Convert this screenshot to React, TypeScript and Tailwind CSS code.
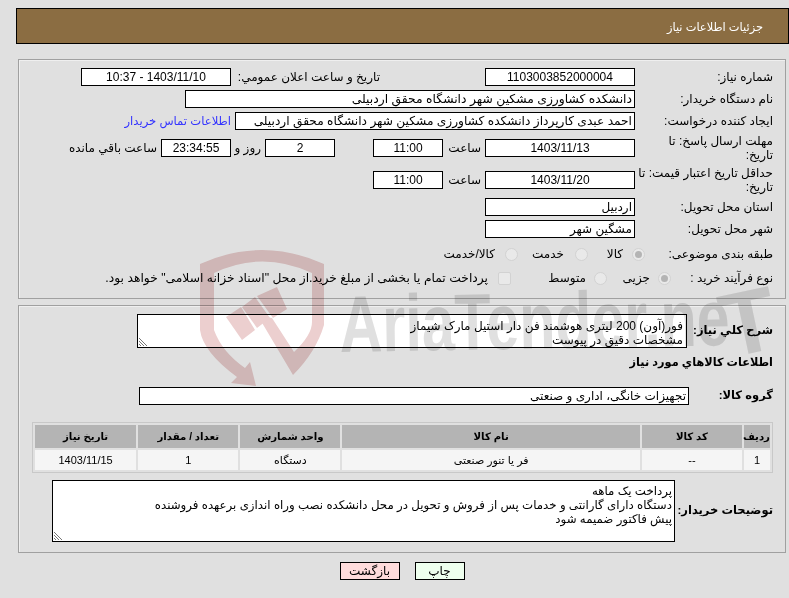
import React from "react";

const F = ({ w, children, cls = "", center = false }: { w: string; children?: React.ReactNode; cls?: string; center?: boolean }) => (
  <div className={`${w} h-[18px] shrink-0 border border-black bg-white leading-[16px] whitespace-nowrap overflow-hidden ${center ? "text-center" : "pr-[2px]"} ${cls}`}>{children}</div>
);

const Label = ({ children, cls = "" }: { children: React.ReactNode; cls?: string }) => (
  <div className={`w-[138px] shrink-0 leading-[14px] whitespace-nowrap ${cls}`}>{children}</div>
);

const Radio = ({ on }: { on?: boolean }) => (
  <span className="w-[13px] h-[13px] shrink-0 rounded-full border border-[#d2d2d2] bg-[#e9e9e9] flex items-center justify-center">
    {on && <span className="w-[7px] h-[7px] rounded-full bg-[#b4b4b4]" />}
  </span>
);

const Head = ({ w, children }: { w: string; children: React.ReactNode }) => (
  <th className={`${w} h-[23px] p-0 bg-[#b4b4b4] text-center font-bold text-[10.2px] whitespace-nowrap`}>{children}</th>
);
const Cell = ({ children }: { children: React.ReactNode }) => (
  <td className="h-[20px] p-0 bg-[#f5f5f5] text-center text-[11px]">{children}</td>
);

const Grip = () => (
  <svg className="absolute left-px bottom-px" width="9" height="9" viewBox="0 0 9 9">
    <path d="M0 1L8 9M0 4L5 9M0 7L2 9" stroke="#777" strokeWidth="1" fill="none" />
  </svg>
);

export default function App() {
  return (
    <div dir="rtl" className="relative h-[598px] w-[789px] overflow-hidden bg-[#e0e0e0] text-[12px] text-black pt-2" style={{ fontFamily: '"Liberation Sans", "DejaVu Sans", sans-serif' }}>
      <div className="ml-4 h-[36px] border border-black bg-[#8b6d42] text-white text-[11.4px] pr-[25px] leading-[36px]">جزئیات اطلاعات نیاز</div>

      <div className="ml-[18px] mr-[3px] mt-[15px] h-[240px] border border-[#a0a0a0] shadow-[inset_1px_1px_0_#efefef] pr-[12px] pt-[8px] flex flex-col">
        <div className="flex items-center h-[18px]">
          <Label>شماره نیاز:</Label>
          <F w="w-[150px]" center>1103003852000004</F>
          <div className="w-[254px] pr-[105px] whitespace-nowrap">تاریخ و ساعت اعلان عمومي:</div>
          <F w="w-[150px]" center>1403/11/10 - 10:37</F>
        </div>
        <div className="flex items-center h-[18px] mt-1">
          <Label>نام دستگاه خریدار:</Label>
          <F w="w-[450px]" cls="text-[12.35px]">دانشکده کشاورزی مشکین شهر دانشگاه محقق اردبیلی</F>
        </div>
        <div className="flex items-center h-[18px] mt-1">
          <Label>ایجاد کننده درخواست:</Label>
          <F w="w-[400px]" cls="text-[12.2px]">احمد عبدی کارپرداز دانشکده کشاورزی مشکین شهر دانشگاه محقق اردبیلی</F>
          <div className="pr-[4px] text-[#3333ff] text-[11.6px] whitespace-nowrap">اطلاعات تماس خریدار</div>
        </div>
        <div className="flex items-center h-[18px] mt-[9px]">
          <Label>مهلت ارسال پاسخ: تا<br />تاریخ:</Label>
          <F w="w-[150px]" center>1403/11/13</F>
          <div className="w-[42px] pr-[4px]">ساعت</div>
          <F w="w-[70px]" center>11:00</F>
          <div className="w-[38px]" />
          <F w="w-[70px]" center>2</F>
          <div className="w-[34px] pr-[4px] whitespace-nowrap">روز و</div>
          <F w="w-[70px]" center cls="bg-[#fffff0]">23:34:55</F>
          <div className="pr-[4px] whitespace-nowrap">ساعت باقي مانده</div>
        </div>
        <div className="flex items-center h-[18px] mt-[14px]">
          <Label>حداقل تاریخ اعتبار قیمت: تا<br />تاریخ:</Label>
          <F w="w-[150px]" center>1403/11/20</F>
          <div className="w-[42px] pr-[4px]">ساعت</div>
          <F w="w-[70px]" center>11:00</F>
        </div>
        <div className="flex items-center h-[18px] mt-[9px]">
          <Label>استان محل تحویل:</Label>
          <F w="w-[150px]">اردبیل</F>
        </div>
        <div className="flex items-center h-[18px] mt-1">
          <Label>شهر محل تحویل:</Label>
          <F w="w-[150px]">مشگین شهر</F>
        </div>
        <div className="flex items-center h-[18px] mt-[7px]">
          <div className="w-[128px] shrink-0">طبقه بندی موضوعی:</div>
          <Radio on />
          <div className="w-[44px] pr-[9px]">کالا</div>
          <Radio />
          <div className="w-[57px] pr-[11px]">خدمت</div>
          <Radio />
          <div className="pr-[10px] whitespace-nowrap">کالا/خدمت</div>
        </div>
        <div className="flex items-center h-[18px] mt-[6px]">
          <div className="w-[102px] shrink-0">نوع فرآیند خرید :</div>
          <Radio on />
          <div className="w-[51px] pr-[8px]">جزیی</div>
          <Radio />
          <div className="w-[83px] pr-[8px]">متوسط</div>
          <span className="w-[13px] h-[13px] shrink-0 rounded-[2px] border border-[#d2d2d2] bg-[#e9e9e9]" />
          <div className="pr-[10px] whitespace-nowrap text-[12.3px]">پرداخت تمام یا بخشی از مبلغ خرید.از محل "اسناد خزانه اسلامی" خواهد بود.</div>
        </div>
      </div>

      <div className="ml-[18px] mr-[3px] mt-[6px] h-[248px] border border-[#a0a0a0] shadow-[inset_1px_1px_0_#efefef] pr-[12px] pt-[8px] flex flex-col">
        <div className="flex items-center h-[34px]">
          <div className="w-[86px] shrink-0 font-bold text-[11.5px] whitespace-nowrap">شرح كلي نياز:</div>
          <div className="relative w-[550px] h-[34px] border border-black bg-white pr-[3px] pt-[4px] leading-[14px] whitespace-nowrap">
            فور(آون) 200 لیتری هوشمند فن دار استیل مارک شیماز
            <br />
            مشخصات دقیق در پیوست
            <Grip />
          </div>
        </div>
        <div className="mt-[6px] h-[16px] leading-[16px] font-bold text-[11.3px]">اطلاعات كالاهاي مورد نياز</div>
        <div className="flex items-center h-[18px] mt-[17px]">
          <div className="w-[84px] shrink-0 font-bold text-[11.5px]">گروه کالا:</div>
          <F w="w-[550px]">تجهیزات خانگی، اداری و صنعتی</F>
        </div>
        <div className="mt-[17px] ml-[12px]">
          <table className="w-[741px] border border-[#c8c8c8] border-separate border-spacing-[2px] table-fixed">
            <thead>
              <tr>
                <Head w="w-[26px]">ردیف</Head>
                <Head w="w-[100px]">کد کالا</Head>
                <Head w="w-[297px]">نام کالا</Head>
                <Head w="w-[100px]">واحد شمارش</Head>
                <Head w="w-[100px]">تعداد / مقدار</Head>
                <Head w="w-[101px]">تاریخ نیاز</Head>
              </tr>
            </thead>
            <tbody>
              <tr>
                <Cell>1</Cell>
                <Cell>--</Cell>
                <Cell>فر یا تنور صنعتی</Cell>
                <Cell>دستگاه</Cell>
                <Cell>1</Cell>
                <Cell>1403/11/15</Cell>
              </tr>
            </tbody>
          </table>
        </div>
        <div className="flex items-center h-[62px] mt-[7px]">
          <div className="w-[98px] shrink-0 font-bold text-[11.5px] whitespace-nowrap">توضیحات خریدار:</div>
          <div className="relative w-[623px] h-[62px] border border-black bg-white pr-[2px] pt-[3px] leading-[14px] whitespace-nowrap text-[11.8px]">
            پرداخت یک ماهه
            <br />
            دستگاه دارای گارانتی و خدمات پس از فروش و تحویل در محل دانشکده نصب وراه اندازی برعهده فروشنده
            <br />
            پیش فاکتور ضمیمه شود
            <Grip />
          </div>
        </div>
      </div>

      <div className="flex justify-center gap-[15px] mt-[9px] pl-[15px]">
        <button className="w-[50px] h-[18px] border border-black bg-[#eeffee] leading-[16px]">چاپ</button>
        <button className="w-[60px] h-[18px] border border-black bg-[#ffdcdc] leading-[16px]">بازگشت</button>
      </div>

      <svg className="absolute left-0 top-0 pointer-events-none mix-blend-multiply [direction:ltr]" width="789" height="598" viewBox="0 0 789 598">
        <g fill="#eccfcf">
          <path fillRule="evenodd" d="M200 264Q262 236 324 264V325Q316 352 293 375L258 316L272 318L294 352Q312 335 312 322V273Q262 250 214 273V330Q222 352 245 368L250 362L256 386L231 383L237 377Q203 352 200 330Z" />
          <path d="M226 317L241 307L255 330L242 340Z" />
          <path d="M242 307L255 297L270 318L257 328Z" />
          <path d="M257 296L277 287L287 309L273 318Z" />
        </g>
        <g fill="#e0e0e0" fontFamily="'Liberation Sans', sans-serif" fontWeight="700">
          <text x="340" y="352" fontSize="80" textLength="390" lengthAdjust="spacingAndGlyphs" transform="rotate(-1 340 352)">AriaTender.ne</text>
          <text x="728" y="358" fontSize="90" transform="rotate(-12 728 358)">T</text>
        </g>
      </svg>
    </div>
  );
}
